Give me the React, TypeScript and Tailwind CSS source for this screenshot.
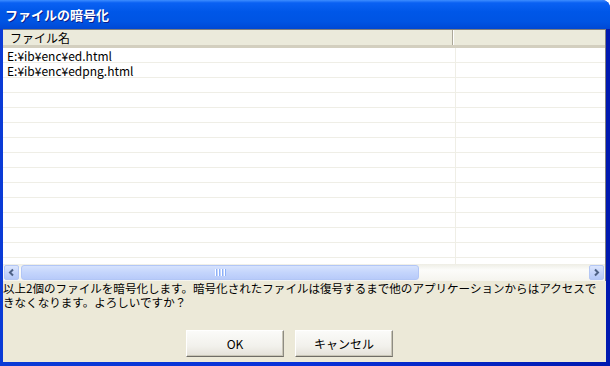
const files = ['E:¥ib¥enc¥ed.html', 'E:¥ib¥enc¥edpng.html'];

const jp = "font-['Noto_Sans_CJK_JP','Noto_Sans',sans-serif]";

function Chevron({ dir }: { dir: 'left' | 'right' }) {
  return (
    <svg width="9" height="9" viewBox="0 0 9 9">
      <path
        d={dir === 'left' ? 'M6 1.5 L3 4.5 L6 7.5' : 'M3 1.5 L6 4.5 L3 7.5'}
        fill="none"
        stroke="#4D6185"
        strokeWidth="2"
      />
    </svg>
  );
}

function ScrollButton({ dir }: { dir: 'left' | 'right' }) {
  return (
    <div className="w-[17px] h-[17px] p-px shrink-0">
      <div className="w-full h-full rounded-[2px] border border-[#B4C7F4] bg-[linear-gradient(180deg,#DCE6FD_0%,#C6D5FB_50%,#B4C8F7_100%)] flex items-center justify-center">
        <Chevron dir={dir} />
      </div>
    </div>
  );
}

function XpButton({ label }: { label: string }) {
  return (
    <div
      className={`w-[98px] h-[27px] border border-t-white border-l-white border-r-[#8E8C83] border-b-[#6F6D66] bg-[linear-gradient(180deg,#FBFBF9_0%,#F2F1EC_60%,#E3E1D8_100%)] shadow-[inset_-1px_-1px_0_#C9C6B7] flex items-center justify-center text-[12px] text-black ${jp}`}
    >
      {label}
    </div>
  );
}

export default function App() {
  const rows = Array.from({ length: 15 }, (_, i) => files[i] ?? '');

  return (
    <div className="w-[610px] h-[366px] bg-white overflow-hidden">
      <div className="w-full h-full rounded-tr-[8px] bg-[#0831D9] flex flex-col overflow-hidden">
        {/* title bar */}
        <div className="h-[29px] shrink-0 bg-[linear-gradient(180deg,#3D8DFF_0%,#0A61F3_10%,#0057E8_40%,#0054E3_75%,#0048D4_100%)] flex items-center pl-[5px]">
          <span
            className={`text-white font-bold text-[13px] [text-shadow:1px_1px_0_#0A1E8C] ${jp}`}
          >
            ファイルの暗号化
          </span>
        </div>

        <div className="flex-1 flex pl-[3px] pr-[4px] pb-[4px] bg-[linear-gradient(90deg,#0A3BD6_0%,#0831D9_50%,#0019B0_100%)]">
          <div className="flex-1 bg-[#ECE9D8] flex flex-col">
            {/* list view */}
            <div className="h-[252px] shrink-0 border-t border-r border-[#7F7F7F] bg-white flex flex-col">
              <div className="h-[18px] shrink-0 flex bg-[#EBEADB] border-b-[3px] border-[#D3CFBF] text-[12px] text-black">
                <div className={`w-[450px] pl-[7px] flex items-center border-r border-[#ACA899] ${jp}`}>
                  ファイル名
                </div>
                <div className="flex-1 border-l border-white" />
              </div>
              <div className="flex-1 overflow-hidden">
                {rows.map((f, i) => (
                  <div key={i} className="h-[15px] flex border-b border-[#EFEEE6]">
                    <div
                      className={`w-[452px] pl-[4px] text-[12px] leading-[15px] text-black whitespace-nowrap ${jp}`}
                    >
                      {f}
                    </div>
                    <div className="flex-1 border-l border-[#EFEEE6]" />
                  </div>
                ))}
              </div>
              {/* horizontal scrollbar */}
              <div className="h-[17px] shrink-0 flex bg-[linear-gradient(180deg,#EEEDE5_0%,#FCFCFA_35%,#F5F4EE_100%)]">
                <ScrollButton dir="left" />
                <div className="w-[400px] h-[17px] p-px shrink-0">
                  <div className="w-full h-full rounded-[3px] border border-[#B2C6F6] bg-[linear-gradient(180deg,#D6E2FD_0%,#C4D5FC_50%,#B8CBF9_100%)] flex items-center justify-center gap-[1px]">
                    {[0, 1, 2, 3].map((g) => (
                      <div key={g} className="w-px h-[7px] bg-white border-r border-[#8CB0F8] box-content" />
                    ))}
                  </div>
                </div>
                <div className="flex-1" />
                <ScrollButton dir="right" />
              </div>
            </div>

            {/* message */}
            <div className={`mt-px text-[11.55px] leading-[13.5px] text-black ${jp}`}>
              <div className="whitespace-nowrap overflow-hidden">
                以上2個のファイルを暗号化します。暗号化されたファイルは復号するまで他のアプリケーションからはアクセスで
              </div>
              <div className="whitespace-nowrap">きなくなります。よろしいですか？</div>
            </div>

            {/* buttons */}
            <div className="mt-[21px] flex gap-[11px] pl-[183px]">
              <XpButton label="OK" />
              <XpButton label="キャンセル" />
            </div>
          </div>
        </div>
      </div>
    </div>
  );
}
